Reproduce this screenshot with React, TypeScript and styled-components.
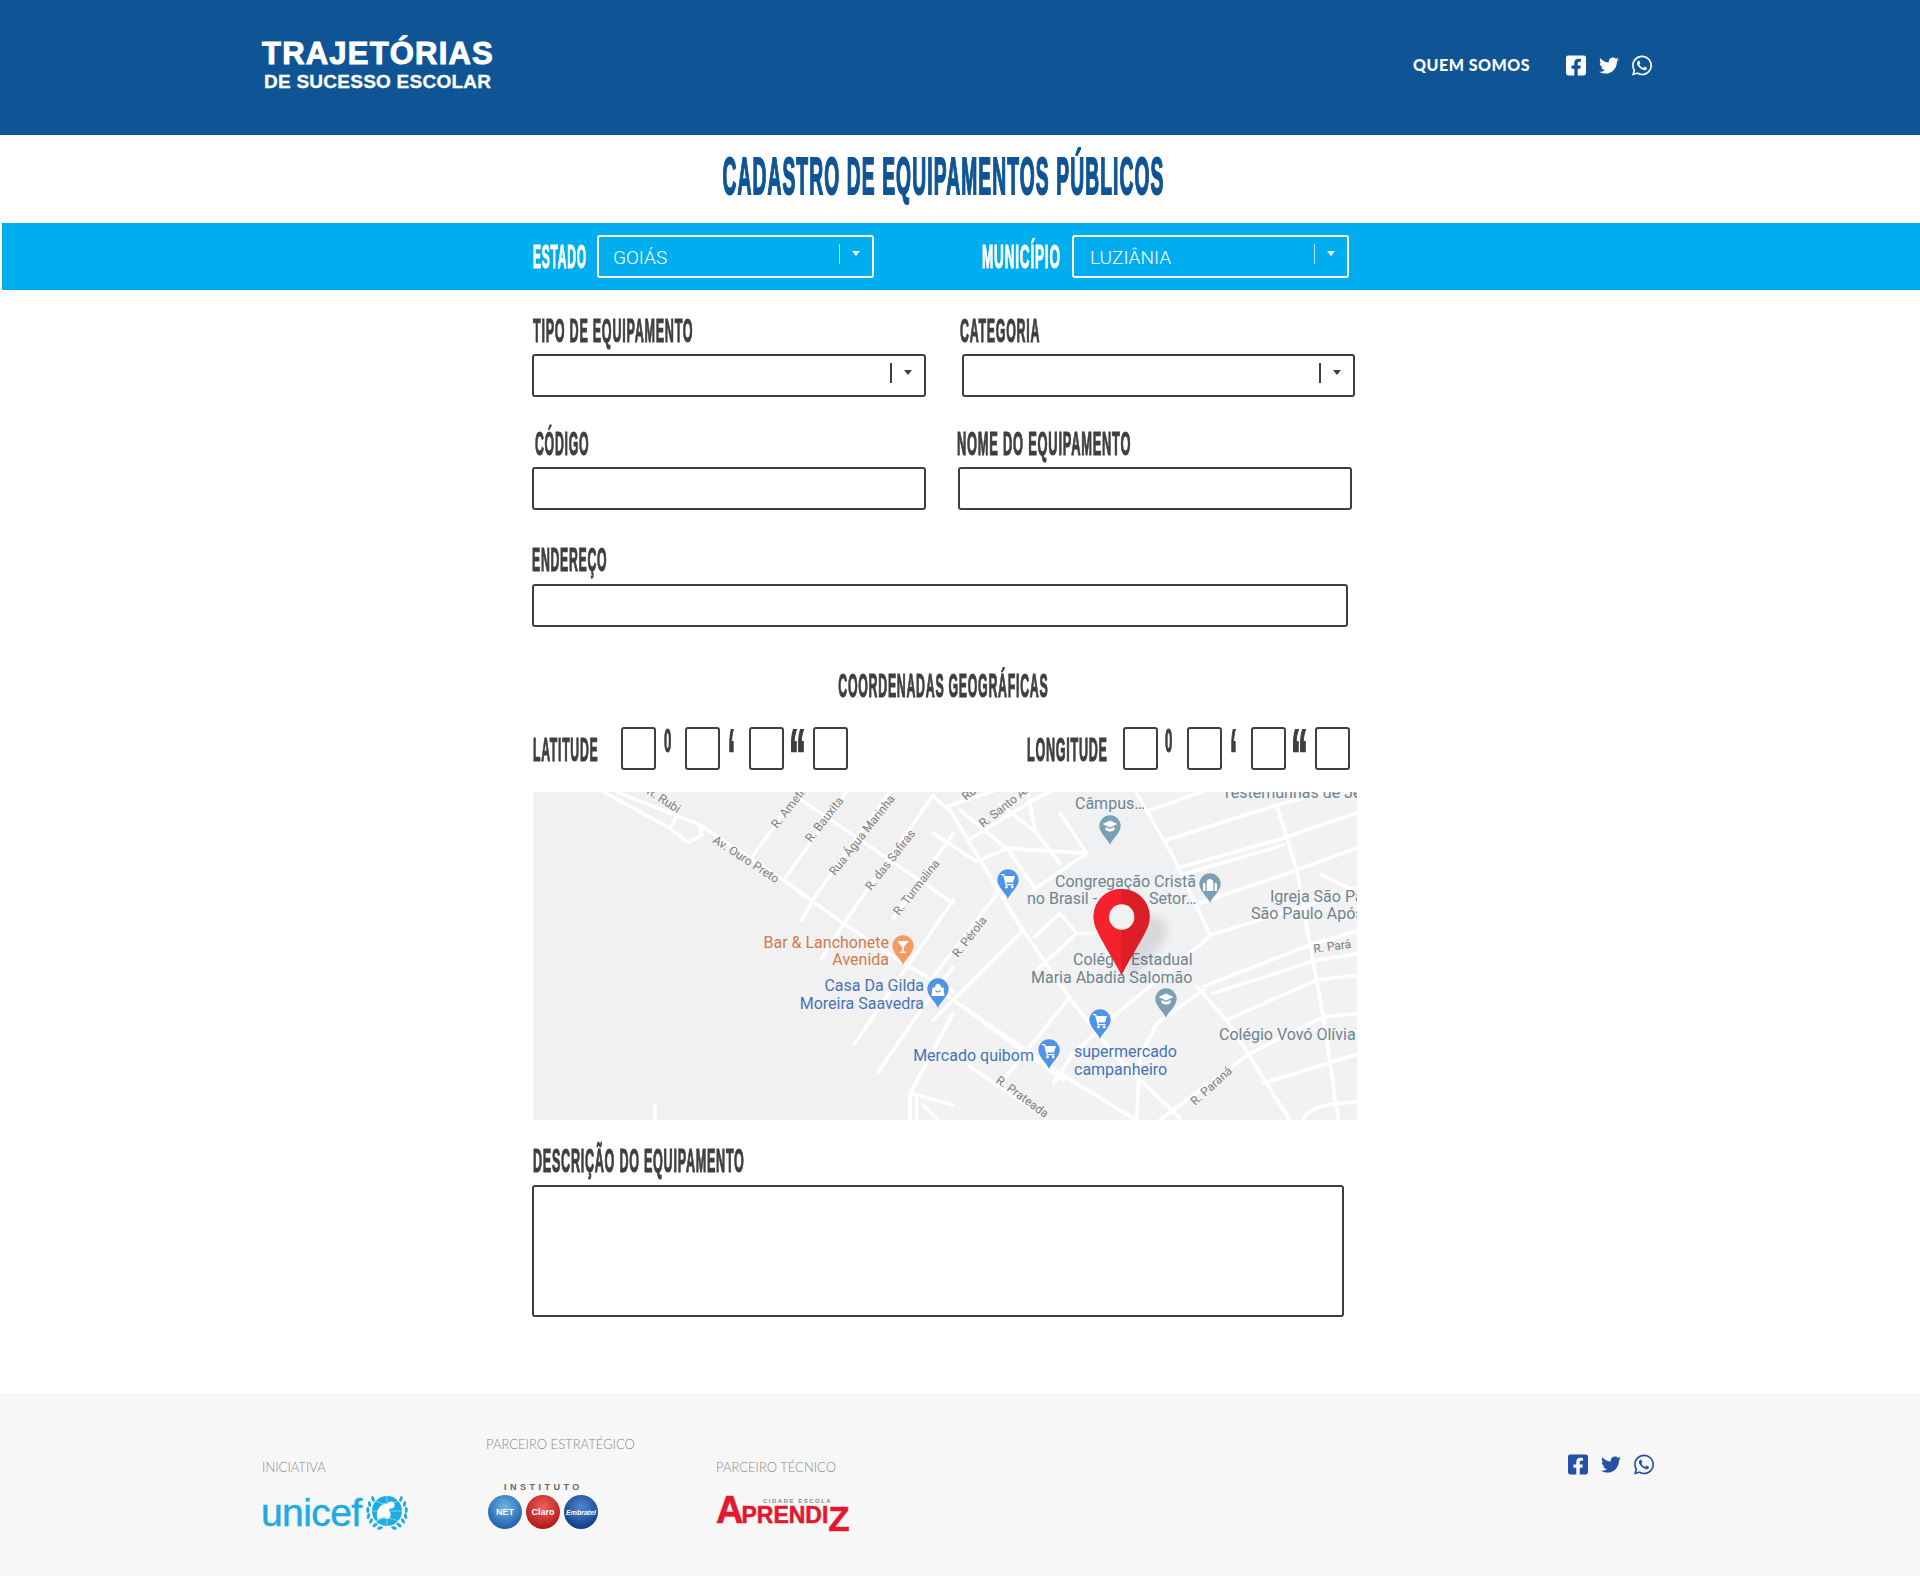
import React from 'react'
import styled, { createGlobalStyle } from 'styled-components'
import { FaFacebookSquare, FaTwitter, FaWhatsapp } from 'react-icons/fa'

const GlobalStyle = createGlobalStyle`
  html, body { margin: 0; padding: 0; background: #fff; }
  body { font-family: 'Liberation Sans', Arial, sans-serif; }
`

const Page = styled.div`
  width: 1920px;
  height: 1576px;
  overflow: hidden;
  display: flex;
  flex-direction: column;
`

const Header = styled.header`
  height: 135px;
  background: #0f5595;
  flex: none;
`

const Container = styled.div`
  width: 1396px;
  margin: 0 auto;
  display: flex;
  justify-content: space-between;
`

const HeaderInner = styled(Container)`
  height: 100%;
  align-items: flex-start;
`

const Logo = styled.div`
  margin-top: 36px;
  color: #fff;
  font-weight: 700;
  white-space: nowrap;
`

const LogoTop = styled.div`
  font-size: 31px;
  line-height: 35px;
  letter-spacing: 1.2px;
  -webkit-text-stroke: 1px #fff;
`

const LogoBottom = styled.div`
  font-size: 19px;
  line-height: 22px;
  margin: 0 0 0 2px;
  letter-spacing: 0.25px;
  -webkit-text-stroke: 0.3px #fff;
`

const Nav = styled.nav`
  display: flex;
  align-items: center;
  margin: 54px 6px 0 0;
`

const NavLink = styled.a`
  font-family: Lato, sans-serif;
  font-weight: 900;
  font-size: 16px;
  letter-spacing: 0.5px;
  color: #fff;
  margin: -2px 36px 0 0;
`

const Social = styled.div<{ $color: string }>`
  display: flex;
  align-items: center;
  gap: 13px;
  color: ${(p) => p.$color};
  svg { display: block; width: 20px; height: 23px; }
`

const Column = styled.div`
  width: 822px;
  margin-left: 532px;
`

const TitleRow = styled(Column)`
  height: 88px;
  flex: none;
  display: flex;
  justify-content: center;
  align-items: flex-start;
`

const Condensed = styled.span<{ $sx: number; $size?: number; $color?: string; $origin?: string; $stroke?: number; $spacing?: number }>`
  display: block;
  width: max-content;
  font-family: 'Liberation Sans Narrow', 'Liberation Sans', sans-serif;
  font-weight: 700;
  white-space: nowrap;
  font-size: ${(p) => p.$size ?? 34}px;
  line-height: 1;
  letter-spacing: ${(p) => p.$spacing ?? 2}px;
  color: ${(p) => p.$color ?? '#3f3f3f'};
  -webkit-text-stroke: ${(p) => p.$stroke ?? 1.2}px ${(p) => p.$color ?? '#3f3f3f'};
  transform: scaleX(${(p) => p.$sx});
  transform-origin: ${(p) => p.$origin ?? 'left'} center;
`

const Title = styled(Condensed)`
  margin-top: 15px;
`

const Band = styled.div`
  height: 67px;
  margin-left: 2px;
  background: #00aeef;
  flex: none;
  display: flex;
  align-items: center;
  padding-left: 531px;
`

const BandLabel = styled.div<{ $width: number; $left?: number }>`
  width: ${(p) => p.$width}px;
  margin-left: ${(p) => p.$left ?? 0}px;
  flex: none;
`

const Select = styled.div<{ $light?: boolean; $width: number; $pad?: number }>`
  box-sizing: border-box;
  width: ${(p) => p.$width}px;
  height: 43px;
  flex: none;
  display: flex;
  align-items: center;
  border: 2px solid ${(p) => (p.$light ? '#fff' : '#3f3f3f')};
  border-radius: 3px;
  color: #fff;
  font-family: Roboto, sans-serif;
  font-weight: 300;
  font-size: 19px;
  padding-left: ${(p) => p.$pad ?? 14}px;
`

const SelectValue = styled.span`
  flex: 1;
  padding-top: 2px;
`

const Divider = styled.i<{ $light?: boolean }>`
  width: ${(p) => (p.$light ? 1 : 2)}px;
  height: 20px;
  margin-top: -6px;
  background: ${(p) => (p.$light ? 'rgba(255,255,255,.7)' : '#3f3f3f')};
`

const Caret = styled.i<{ $light?: boolean }>`
  width: 0;
  height: 0;
  margin: -6px 12px 0 12px;
  border-left: 4.5px solid transparent;
  border-right: 4.5px solid transparent;
  border-top: 5px solid ${(p) => (p.$light ? '#fff' : '#3f3f3f')};
`

const Form = styled(Column)`
  padding-top: 28px;
`

const FieldRow = styled.div<{ $gap: number; $top: number }>`
  display: flex;
  gap: ${(p) => p.$gap}px;
  margin-top: ${(p) => p.$top}px;
`

const Field = styled.div<{ $width: number }>`
  width: ${(p) => p.$width}px;
  flex: none;
`

const LabelLine = styled.div<{ $height?: number; $indent?: number }>`
  display: flex;
  align-items: flex-start;
  height: ${(p) => p.$height ?? 36}px;
  margin-left: ${(p) => p.$indent ?? 0}px;
  > span { margin-top: -5px; }
`

const Input = styled.div<{ $height?: number }>`
  box-sizing: border-box;
  width: 100%;
  height: ${(p) => p.$height ?? 43}px;
  border: 2px solid #3f3f3f;
  border-radius: 3px;
  background: #fff;
`

const CoordTitle = styled.div`
  margin-top: 46px;
  height: 54px;
  display: flex;
  justify-content: center;
  align-items: flex-start;
  > span { margin-top: -5px; }
`

const CoordRow = styled.div`
  display: flex;
  align-items: flex-start;
  height: 43px;
`

const CoordLabel = styled.div<{ $width: number; $indent?: number }>`
  box-sizing: border-box;
  width: ${(p) => p.$width}px;
  flex: none;
  padding: 5px 0 0 ${(p) => p.$indent ?? 0}px;
`

const CoordBox = styled(Input)`
  width: 35px;
  flex: none;
`

const Unit = styled.div<{ $pad: number; $top: number }>`
  width: 29px;
  box-sizing: border-box;
  flex: none;
  padding-left: ${(p) => p.$pad}px;
  > span { margin-top: ${(p) => p.$top}px; }
`

const CoordSpacer = styled.div<{ $width: number }>`
  width: ${(p) => p.$width}px;
  flex: none;
`

const MapFrame = styled.div`
  width: 824px;
  height: 328px;
  margin: 22px 0 0 1px;
  background: #f2f1f1;
  svg { display: block; }
`

const Footer = styled.footer`
  margin-top: auto;
  height: 183px;
  background: #f7f7f7;
  flex: none;
`

const FooterInner = styled(Container)`
  position: relative;
  height: 100%;
`

const Partners = styled.div`
  display: flex;
  align-items: flex-start;
`

const Partner = styled.div<{ $width: number; $top: number }>`
  width: ${(p) => p.$width}px;
  padding-top: ${(p) => p.$top}px;
`

const PartnerTitle = styled.div`
  font-family: Lato, sans-serif;
  font-weight: 300;
  font-size: 13px;
  line-height: 16px;
  color: #8b8b8b;
  white-space: nowrap;
`

const UnicefLogo = styled.div`
  display: flex;
  align-items: flex-start;
  margin: 19px 0 0 -1px;
  height: 40px;
  color: #1cabe2;
  svg { margin: -1px 0 0 5px; flex: none; }
`

const UnicefWord = styled.span`
  font-size: 39px;
  letter-spacing: -0.6px;
  line-height: 38px;
  -webkit-text-stroke: 0.5px #1cabe2;
`

const InstitutoLabel = styled.div`
  margin: 29px 0 0 18px;
  font-size: 9px;
  line-height: 12px;
  font-weight: 700;
  letter-spacing: 3.5px;
  color: #666;
`

const Balls = styled.div`
  display: flex;
  gap: 4px;
  margin: 2px 0 0 2px;
`

const Ball = styled.div<{ $from: string; $to: string; $size: number; $italic?: boolean }>`
  width: 34px;
  height: 34px;
  border-radius: 50%;
  background: radial-gradient(circle at 50% 35%, ${(p) => p.$from}, ${(p) => p.$to} 78%);
  color: #fff;
  display: flex;
  align-items: center;
  justify-content: center;
  font-weight: 700;
  font-style: ${(p) => (p.$italic ? 'italic' : 'normal')};
  font-size: ${(p) => p.$size}px;
`

const AprendizLogo = styled.div`
  position: relative;
  display: flex;
  align-items: flex-end;
  margin-top: 21px;
  height: 36px;
  color: #e4172f;
  font-weight: 700;
  white-space: nowrap;
`

const AprendizCap = styled.span`
  font-size: 38px;
  line-height: 28px;
  height: 28px;
  margin: 0 -2px 8px 0;
  -webkit-text-stroke: 0.6px #e4172f;
`

const AprendizSmall = styled.span`
  font-size: 23px;
  line-height: 18px;
  height: 18px;
  margin-bottom: 8px;
  -webkit-text-stroke: 0.5px #e4172f;
`

const AprendizEnd = styled.span`
  font-size: 35px;
  line-height: 26px;
  height: 26px;
  -webkit-text-stroke: 0.5px #e4172f;
`

const CidadeEscola = styled.span`
  position: absolute;
  left: 47px;
  top: 2px;
  font-size: 6px;
  font-weight: 700;
  letter-spacing: 1.5px;
  color: #888;
`

const FooterSocial = styled.div`
  margin: 60px 4px 0 0;
`

const roads5 = [
  'M265 8 L510 105 L760 270 L940 400 L1120 520 L1270 605',
  'M220 5 L420 115 L475 158 L515 135 L510 105',
  'M440 80 L420 115',
  'M670 195 L810 5',
  'M765 265 L950 5',
  'M815 390 L855 320 L1080 5',
  'M875 505 L945 395 L1210 15',
  'M975 760 L1090 590 L1270 330',
  'M1045 845 L1180 650 L1270 530',
  'M1090 385 L1270 130',
  'M800 20 L1270 340',
  'M1210 20 L1270 70',
  'M1140 990 L1140 910 L1270 670',
  'M1140 910 L1270 945',
  'M1160 925 L1160 990',
  'M1180 945 L1225 990',
  'M375 945 L375 990',
]

const roads6 = [
  'M-20 590 L360 850 L580 985',
  'M30 60 L120 210 L235 400 L400 640 L520 790 L720 985',
  'M-20 130 L110 215 L200 175 L440 190',
  'M60 60 L205 180 L285 295',
  'M20 50 L200 -10',
  'M85 150 L280 30 L360 -10',
  'M180 40 L290 130 L360 220',
  'M360 70 L440 190 L280 300',
  'M260 -10 L285 120',
  'M590 10 L700 200 L810 435',
  'M630 60 L800 0',
  'M680 150 L1010 45 L1260 -20',
  'M710 235 L1030 145 L1260 65',
  'M725 255 L1030 165',
  'M780 340 L1070 240 L1260 170',
  'M810 435 L1090 350 L1260 290',
  'M810 440 L760 480 L640 580 L520 680 L400 790 L340 880',
  'M790 590 L1110 465 L1260 420',
  'M820 610 L1130 510 L1260 490',
  'M860 690 L1130 570 L1260 555',
  'M930 790 L1150 680 L1260 670',
  'M970 880 L1260 790',
  'M1010 45 L1070 240 L1110 465 L1150 680 L1195 990',
  'M770 590 L860 690 L980 880 L1050 990',
  'M790 600 L650 700 L600 800 L590 990',
  'M930 790 L660 990',
  'M250 420 L-20 690',
  'M390 620 L190 870',
  'M180 300 L-20 560',
  'M285 440 L360 370 L410 430 L470 430',
  'M410 430 L290 540',
  'M70 650 L190 740 L370 870',
  'M90 830 L320 985',
  'M1090 985 Q1110 950 1190 940 L1260 935',
  'M1145 255 L1240 300',
]

const Teardrop = ({ x, y, color, kind }: { x: number; y: number; color: string; kind: string }) => (
  <g transform={`translate(${x} ${y})`}>
    <path d="M0 18 C-2 12 -10.7 6 -10.7 -1 A10.7 10.7 0 1 1 10.7 -1 C10.7 6 2 12 0 18 Z" fill={color} />
    {kind === 'cart' && (
      <g fill="#fff">
        <path d="M-7 -7 H-4 L-3.3 -5 H7 L5 1.5 H-1.8 L-1.2 3 H5.5 V4.3 H-2.4 L-4.8 -5.7 H-7 Z" />
        <circle cx="-1.5" cy="6" r="1.4" />
        <circle cx="4.2" cy="6" r="1.4" />
      </g>
    )}
    {kind === 'school' && (
      <path d="M-7.5 -3 L0 -6.5 L7.5 -3 L0 .5 Z M-4.5 0 V3 Q0 6 4.5 3 V0 L0 2 Z" fill="#fff" />
    )}
    {kind === 'church' && (
      <path d="M-7 6 V-1 Q-5.8 -3.5 -4.6 -1 V6 Z M-3.3 6 V-4 Q0 -8 3.3 -4 V6 Z M4.6 6 V-1 Q5.8 -3.5 7 -1 V6 Z" fill="#fff" />
    )}
    {kind === 'bar' && (
      <path d="M-5.5 -6 H5.5 L.8 .5 V4.5 H3 V6 H-3 V4.5 H-.8 V.5 Z" fill="#fff" />
    )}
    {kind === 'bag' && (
      <g>
        <path d="M-5.5 -2.5 H-3 C-3 -7.5 3 -7.5 3 -2.5 H5.5 L6.5 6 H-6.5 Z" fill="#fff" />
        <path d="M-2.5 .5 Q0 3.5 2.5 .5" fill="none" stroke={color} strokeWidth="1.2" />
      </g>
    )}
  </g>
)

const MapCanvas = () => (
  <svg width="824" height="328" viewBox="533 792 824 328" fontFamily="Roboto, sans-serif">
    <defs>
      <filter id="pinShadow" x="-40%" y="-20%" width="200%" height="150%">
        <feGaussianBlur stdDeviation="5" />
      </filter>
    </defs>
    <rect x="533" y="792" width="824" height="328" fill="#f2f1f1" />
    <path d="M872 1120 L900 1070 L960 1000 L1000 792 L1358 792 L1358 1120 Z" fill="#f2f2f3" />
    <path d="M1080 792 L1155 792 L1215 905 L1180 1000 L1110 990 L1040 900 Z" fill="#eff1f3" />
    <g transform="translate(530 790) scale(.33333)" fill="none" stroke="#fff" strokeWidth="11" strokeLinecap="round" strokeLinejoin="round">
      {roads5.map((d) => <path key={d} d={d} />)}
    </g>
    <g transform="translate(940 790) scale(.33333)" fill="none" stroke="#fff" strokeWidth="11" strokeLinecap="round" strokeLinejoin="round">
      {roads6.map((d) => <path key={d} d={d} />)}
    </g>

    <g fill="#7d7d7d" fontSize="12">
      <text x="646" y="793" transform="rotate(33 646 793)">R. Rubi</text>
      <text x="712" y="842" transform="rotate(33 712 842)">Av. Ouro Preto</text>
      <text x="777" y="829" transform="rotate(-52 777 829)">R. Ametista</text>
      <text x="811" y="843" transform="rotate(-52 811 843)">R. Bauxita</text>
      <text x="835" y="876" transform="rotate(-52 835 876)">Rua Água Marinha</text>
      <text x="871" y="891" transform="rotate(-52 871 891)">R. das Safiras</text>
      <text x="899" y="916" transform="rotate(-52 899 916)">R. Turmalina</text>
      <text x="966" y="801" transform="rotate(-38 966 801)">Rua</text>
      <text x="983" y="828" transform="rotate(-38 983 828)">R. Santo Antônio</text>
      <text x="958" y="958" transform="rotate(-52 958 958)">R. Pérola</text>
      <text x="995" y="1082" transform="rotate(36 995 1082)">R. Prateada</text>
      <text x="1195" y="1106" transform="rotate(-42 1195 1106)">R. Paraná</text>
      <text x="1314" y="953" transform="rotate(-8 1314 953)">R. Pará</text>
    </g>

    <g fill="#6f8490" fontSize="16">
      <text x="1222" y="798">Testemunhas de Jeová</text>
      <text x="1075" y="809">Câmpus…</text>
      <text x="1055" y="887">Congregação Cristã</text>
      <text x="1027" y="904">no Brasil -</text>
      <text x="1149" y="904">Setor…</text>
      <text x="1270" y="902">Igreja São Paulo</text>
      <text x="1251" y="919">São Paulo Apóstolo</text>
      <text x="1073" y="965">Colégio Estadual</text>
      <text x="1031" y="983">Maria Abadia Salomão</text>
      <text x="1219" y="1040">Colégio Vovó Olívia</text>
    </g>
    <g fill="#cf7b4f" fontSize="16" textAnchor="end">
      <text x="889" y="948">Bar &amp; Lanchonete</text>
      <text x="889" y="965">Avenida</text>
    </g>
    <g fill="#4674b8" fontSize="16">
      <text x="924" y="991" textAnchor="end">Casa Da Gilda</text>
      <text x="924" y="1009" textAnchor="end">Moreira Saavedra</text>
      <text x="1034" y="1061" textAnchor="end">Mercado quibom</text>
      <text x="1074" y="1057">supermercado</text>
      <text x="1074" y="1075">campanheiro</text>
    </g>

    <Teardrop x={1110} y={827} color="#7ba0b3" kind="school" />
    <Teardrop x={1210} y={885} color="#7ba0b3" kind="church" />
    <Teardrop x={1166} y={1000} color="#7ba0b3" kind="school" />
    <Teardrop x={1008} y={881} color="#4e94e8" kind="cart" />
    <Teardrop x={1100} y={1021} color="#4e94e8" kind="cart" />
    <Teardrop x={1049} y={1051} color="#4e94e8" kind="cart" />
    <Teardrop x={938} y={990} color="#4e94e8" kind="bag" />
    <Teardrop x={903} y={947} color="#f59a61" kind="bar" />

    <path d="M1128 922 a27 27 0 0 1 40 5 C1164 945 1145 965 1128 980 Z" fill="#000" opacity=".1" filter="url(#pinShadow)" />
    <path d="M1121.7 889 A27.7 27.7 0 0 1 1147.4 928 C1141 942 1129 960 1121.7 975 C1114 960 1102 942 1096 928 A27.7 27.7 0 0 1 1121.7 889 Z" fill="#dc1f26" />
    <path d="M1121.7 889 A27.7 27.7 0 0 0 1096 928 C1102 942 1114 960 1121.7 975 Z" fill="#f5222d" />
    <circle cx="1121.7" cy="917" r="12.7" fill="#f1f1f1" />
  </svg>
)

const wreathLeaves = [
  [7, 6, -20], [3.5, 11, -10], [1.8, 17, 0], [2.5, 23, 15], [5, 28, 30], [9, 32, 50], [14, 35, 70],
]

const UnicefEmblem = () => (
  <svg width="42" height="40" viewBox="0 0 42 40">
    <circle cx="21" cy="18" r="15" fill="#1cabe2" />
    <path d="M6 18 H36 M21 3 V33 M10 8 Q21 14 32 8 M10 28 Q21 22 32 28" fill="none" stroke="#9bdcf5" strokeWidth=".8" />
    <path d="M12 27 C9 21 12 13 18 11 C23 10 25 14 23 18 C26 21 25 25 21 26 C19 24 16 24 12 27 Z" fill="#fff" />
    <circle cx="25" cy="12" r="3.6" fill="#fff" />
    <g fill="#1cabe2">
      {wreathLeaves.map(([x, y, r]) => (
        <g key={`${x}-${y}`}>
          <ellipse cx={x} cy={y} rx="1.5" ry="3" transform={`rotate(${r} ${x} ${y})`} />
          <ellipse cx={42 - x} cy={y} rx="1.5" ry="3" transform={`rotate(${-r} ${42 - x} ${y})`} />
        </g>
      ))}
    </g>
  </svg>
)

export default function App() {
  return (
    <Page>
      <GlobalStyle />
      <Header>
        <HeaderInner>
          <Logo>
            <LogoTop>TRAJETÓRIAS</LogoTop>
            <LogoBottom>DE SUCESSO ESCOLAR</LogoBottom>
          </Logo>
          <Nav>
            <NavLink>QUEM SOMOS</NavLink>
            <Social $color="#fff">
              <FaFacebookSquare />
              <FaTwitter />
              <FaWhatsapp />
            </Social>
          </Nav>
        </HeaderInner>
      </Header>

      <TitleRow>
        <Title $sx={0.37} $size={52} $color="#0f5595" $origin="center" $stroke={2} $spacing={3}>CADASTRO DE EQUIPAMENTOS PÚBLICOS</Title>
      </TitleRow>

      <Band>
        <BandLabel $width={64}><Condensed $sx={0.367} $size={33} $color="#fff">ESTADO</Condensed></BandLabel>
        <Select $light $width={277}>
          <SelectValue>GOIÁS</SelectValue>
          <Divider $light />
          <Caret $light />
        </Select>
        <BandLabel $width={90} $left={108}><Condensed $sx={0.41} $size={33} $color="#fff">MUNICÍPIO</Condensed></BandLabel>
        <Select $light $width={277} $pad={16}>
          <SelectValue>LUZIÂNIA</SelectValue>
          <Divider $light />
          <Caret $light />
        </Select>
      </Band>

      <Form>
        <FieldRow $gap={36} $top={0}>
          <Field $width={394}>
            <LabelLine $indent={1}><Condensed $sx={0.37}>TIPO DE EQUIPAMENTO</Condensed></LabelLine>
            <Select $width={394}><SelectValue /><Divider /><Caret /></Select>
          </Field>
          <Field $width={393}>
            <LabelLine $indent={-2}><Condensed $sx={0.365}>CATEGORIA</Condensed></LabelLine>
            <Select $width={393}><SelectValue /><Divider /><Caret /></Select>
          </Field>
        </FieldRow>
        <FieldRow $gap={32} $top={34}>
          <Field $width={394}>
            <LabelLine $indent={3}><Condensed $sx={0.362}>CÓDIGO</Condensed></LabelLine>
            <Input />
          </Field>
          <Field $width={394}>
            <LabelLine $indent={-1}><Condensed $sx={0.379}>NOME DO EQUIPAMENTO</Condensed></LabelLine>
            <Input />
          </Field>
        </FieldRow>
        <FieldRow $gap={0} $top={37}>
          <Field $width={816}>
            <LabelLine $height={37}><Condensed $sx={0.361}>ENDEREÇO</Condensed></LabelLine>
            <Input />
          </Field>
        </FieldRow>

        <CoordTitle><Condensed $sx={0.363} $origin="center">COORDENADAS GEOGRÁFICAS</Condensed></CoordTitle>
        <CoordRow>
          <CoordLabel $width={89} $indent={1}><Condensed $sx={0.36}>LATITUDE</Condensed></CoordLabel>
          <CoordBox />
          <Unit $pad={8} $top={-4}><Condensed $sx={0.39}>0</Condensed></Unit>
          <CoordBox />
          <Unit $pad={8} $top={-8}><Condensed $sx={0.35} $size={72} $stroke={2}>‘</Condensed></Unit>
          <CoordBox />
          <Unit $pad={5} $top={-8}><Condensed $sx={0.47} $size={72} $stroke={2}>“</Condensed></Unit>
          <CoordBox />
          <CoordSpacer $width={179} />
          <CoordLabel $width={96}><Condensed $sx={0.37}>LONGITUDE</Condensed></CoordLabel>
          <CoordBox />
          <Unit $pad={7} $top={-4}><Condensed $sx={0.39}>0</Condensed></Unit>
          <CoordBox />
          <Unit $pad={8} $top={-8}><Condensed $sx={0.35} $size={72} $stroke={2}>‘</Condensed></Unit>
          <CoordBox />
          <Unit $pad={5} $top={-8}><Condensed $sx={0.47} $size={72} $stroke={2}>“</Condensed></Unit>
          <CoordBox />
        </CoordRow>

        <MapFrame><MapCanvas /></MapFrame>

        <FieldRow $gap={0} $top={28}>
          <Field $width={812}>
            <LabelLine $height={37} $indent={1}><Condensed $sx={0.37}>DESCRIÇÃO DO EQUIPAMENTO</Condensed></LabelLine>
            <Input $height={132} />
          </Field>
        </FieldRow>
      </Form>

      <Footer>
        <FooterInner>
          <Partners>
            <Partner $width={224} $top={66}>
              <PartnerTitle>INICIATIVA</PartnerTitle>
              <UnicefLogo>
                <UnicefWord>unicef</UnicefWord>
                <UnicefEmblem />
              </UnicefLogo>
            </Partner>
            <Partner $width={230} $top={43}>
              <PartnerTitle>PARCEIRO ESTRATÉGICO</PartnerTitle>
              <InstitutoLabel>INSTITUTO</InstitutoLabel>
              <Balls>
                <Ball $from="#6fb3e8" $to="#1f5fa8" $size={9}>NET</Ball>
                <Ball $from="#f0605a" $to="#b01818" $size={9}>Claro</Ball>
                <Ball $from="#4f86cf" $to="#123f86" $size={7} $italic>Embratel</Ball>
              </Balls>
            </Partner>
            <Partner $width={160} $top={66}>
              <PartnerTitle>PARCEIRO TÉCNICO</PartnerTitle>
              <AprendizLogo>
                <CidadeEscola>CIDADE ESCOLA</CidadeEscola>
                <AprendizCap>A</AprendizCap>
                <AprendizSmall>PRENDI</AprendizSmall>
                <AprendizEnd>Z</AprendizEnd>
              </AprendizLogo>
            </Partner>
          </Partners>
          <FooterSocial>
            <Social $color="#2451a6"><FaFacebookSquare /><FaTwitter /><FaWhatsapp /></Social>
          </FooterSocial>
        </FooterInner>
      </Footer>
    </Page>
  )
}
